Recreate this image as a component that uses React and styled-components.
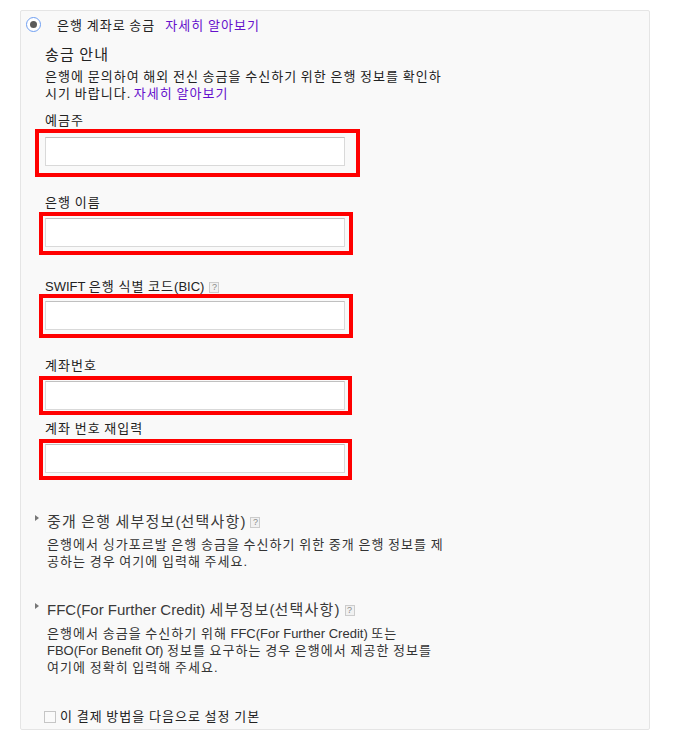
import React from "react";
import styled, { createGlobalStyle } from "styled-components";

const Global = createGlobalStyle`
  html, body { margin: 0; padding: 0; background: #fff; }
  body {
    font-family: "Liberation Sans", "Noto Sans CJK KR", sans-serif;
    font-size: 13px;
    color: #222;
  }
`;

const Hg = styled.span`
  letter-spacing: 0.08em;
`;

const HANGUL = /([\uAC00-\uD7A3\u3131-\u318E]+)/;
function K({ children }) {
  const parts = String(children).split(HANGUL);
  return parts.map((p, i) =>
    i % 2 === 1 ? <Hg key={i}>{p}</Hg> : <React.Fragment key={i}>{p}</React.Fragment>
  );
}

const Page = styled.div`
  padding: 10px 0 0 20px;
`;

const Panel = styled.div`
  box-sizing: border-box;
  width: 630px;
  background: #f9f9f9;
  border: 1px solid #e5e5e5;
  border-radius: 2px;
  padding: 4px 0 4px 0;
`;

const RadioRow = styled.div`
  display: flex;
  align-items: center;
  height: 18px;
  padding-left: 5px;
  font-size: 13px;
`;

const Radio = styled.span`
  box-sizing: border-box;
  width: 15px;
  height: 15px;
  border-radius: 50%;
  border: 1.5px solid #6f9ff2;
  background: #fff;
  display: flex;
  align-items: center;
  justify-content: center;
  &::after {
    content: "";
    width: 7px;
    height: 7px;
    border-radius: 50%;
    background: #5a5a5a;
  }
`;

const RadioText = styled.span`
  margin-left: 16px;
  color: #222;
`;

const Link = styled.a`
  color: #6611cc;
  text-decoration: none;
  margin-left: ${(p) => p.$gap || 0}px;
  cursor: pointer;
`;

const Body = styled.div`
  padding-left: 14px;
`;

const IntroTitle = styled.div`
  padding-left: 10px;
  margin-top: 12px;
  font-size: 15px;
  line-height: 20px;
  color: #222;
`;

const IntroText = styled.div`
  padding-left: 10px;
  margin-top: 3px;
  line-height: 17px;
  color: #222;
`;

const Label = styled.div`
  display: flex;
  align-items: center;
  padding-left: 10px;
  margin-top: ${(p) => p.$mt}px;
  line-height: 14px;
  height: 14px;
  color: #222;
`;

const FieldBox = styled.div`
  box-sizing: border-box;
  width: ${(p) => p.$w}px;
  margin-left: ${(p) => p.$ml}px;
  margin-top: ${(p) => p.$mt}px;
  padding: ${(p) => p.$pad};
  border: 4px solid #ff0000;
`;

const Input = styled.input`
  display: block;
  box-sizing: border-box;
  width: 300px;
  height: 29px;
  margin: 0;
  padding: 0 6px;
  border: 1px solid #d9d9d9;
  border-top-color: #c0c0c0;
  background: #fff;
  outline: none;
  font: inherit;
`;

const Help = styled.span`
  box-sizing: border-box;
  display: inline-flex;
  align-items: center;
  justify-content: center;
  width: 10px;
  height: 11px;
  margin-left: ${(p) => p.$gap || 5}px;
  border: 1px solid #cccccc;
  background: #f1f1f1;
  color: #8a8a8a;
  font-family: "Liberation Sans", sans-serif;
  font-size: 9px;
  line-height: 9px;
`;

const SectionHead = styled.div`
  display: flex;
  align-items: center;
  margin-top: ${(p) => p.$mt}px;
  font-size: 15px;
  line-height: 20px;
  color: #3a3a3a;
`;

const Triangle = styled.span`
  align-self: flex-start;
  margin-top: 3px;
  width: 0;
  height: 0;
  border-left: 4px solid #777;
  border-top: 3.5px solid transparent;
  border-bottom: 3.5px solid transparent;
  margin-right: 8px;
`;

const SectionText = styled.div`
  padding-left: 12px;
  margin-top: ${(p) => p.$mt}px;
  line-height: 17px;
  color: #333;
  white-space: nowrap;
`;

const CheckRow = styled.label`
  display: flex;
  align-items: center;
  padding-left: 9px;
  margin-top: ${(p) => p.$mt}px;
  line-height: 16px;
  color: #222;
`;

const Checkbox = styled.span`
  box-sizing: border-box;
  width: 12px;
  height: 12px;
  border: 1px solid #c6c6c6;
  background: #fafafa;
  margin-right: 4px;
`;

const fields = [
  { label: "예금주", lmt: 12, bmt: 1, w: 325, ml: 0, pad: "4px 11px 7px 6px" },
  { label: "은행 이름", lmt: 19, bmt: 2, w: 314, ml: 4, pad: "2px 4px 4px 2px" },
  { label: "SWIFT 은행 식별 코드(BIC)", help: true, lmt: 25, bmt: 0, w: 314, ml: 4, pad: "3px 4px 4px 2px" },
  { label: "계좌번호", lmt: 21, bmt: 3, w: 313, ml: 4, pad: "1px 3px 1px 2px" },
  { label: "계좌 번호 재입력", lmt: 7, bmt: 3, w: 313, ml: 4, pad: "1px 3px 3px 2px" },
];

export default function App() {
  return (
    <>
      <Global />
      <Page>
        <Panel>
          <RadioRow>
            <Radio />
            <RadioText><K>은행 계좌로 송금</K></RadioText>
            <Link $gap={10}><K>자세히 알아보기</K></Link>
          </RadioRow>
          <Body>
            <IntroTitle><K>송금 안내</K></IntroTitle>
            <IntroText>
              <K>은행에 문의하여 해외 전신 송금을 수신하기 위한 은행 정보를 확인하</K>
              <br />
              <K>시기 바랍니다. </K>
              <Link><K>자세히 알아보기</K></Link>
            </IntroText>

            {fields.map((f) => (
              <React.Fragment key={f.label}>
                <Label $mt={f.lmt}>
                  <span><K>{f.label}</K></span>
                  {f.help && <Help $gap={5}>?</Help>}
                </Label>
                <FieldBox $w={f.w} $ml={f.ml} $mt={f.bmt} $pad={f.pad}>
                  <Input type="text" />
                </FieldBox>
              </React.Fragment>
            ))}

            <SectionHead $mt={32}>
              <Triangle />
              <span><K>중개 은행 세부정보(선택사항)</K></span>
              <Help>?</Help>
            </SectionHead>
            <SectionText $mt={4}>
              <K>은행에서 싱가포르발 은행 송금을 수신하기 위한 중개 은행 정보를 제</K>
              <br />
              <K>공하는 경우 여기에 입력해 주세요.</K>
            </SectionText>

            <SectionHead $mt={30}>
              <Triangle />
              <span><K>FFC(For Further Credit) 세부정보(선택사항)</K></span>
              <Help>?</Help>
            </SectionHead>
            <SectionText $mt={5}>
              <K>은행에서 송금을 수신하기 위해 FFC(For Further Credit) 또는</K>
              <br />
              <K>FBO(For Benefit Of) 정보를 요구하는 경우 은행에서 제공한 정보를</K>
              <br />
              <K>여기에 정확히 입력해 주세요.</K>
            </SectionText>

            <CheckRow $mt={33}>
              <Checkbox />
              <span><K>이 결제 방법을 다음으로 설정 기본</K></span>
            </CheckRow>
          </Body>
        </Panel>
      </Page>
    </>
  );
}
